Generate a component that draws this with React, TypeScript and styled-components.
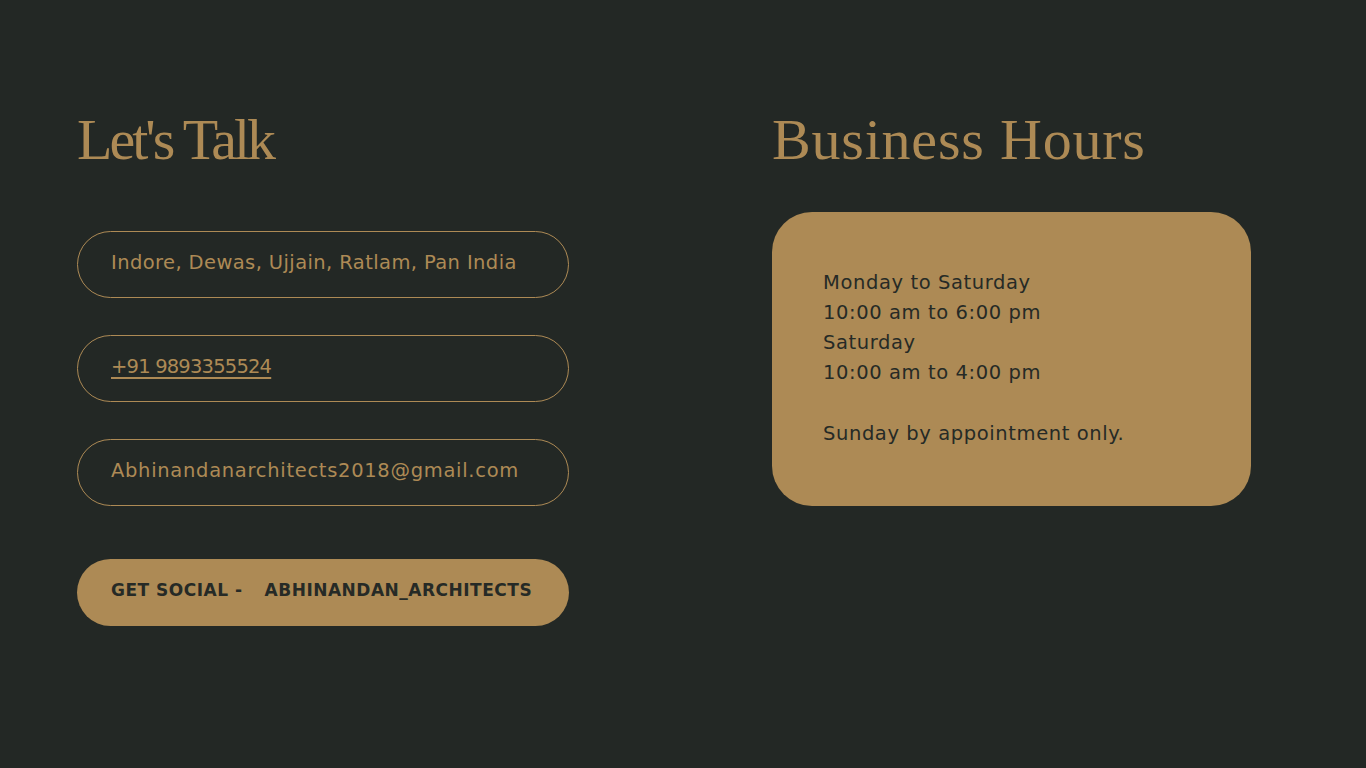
import React from "react";
import styled, { createGlobalStyle } from "styled-components";

const gold = "#ad8a55";
const bg = "#232825";
const ink = "#262a26";

const Global = createGlobalStyle`
  html, body { margin: 0; padding: 0; background: ${bg}; }
  body { font-family: "DejaVu Sans", "Open Sans", sans-serif; }
`;

const Page = styled.div`
  width: 1366px;
  height: 768px;
  box-sizing: border-box;
  padding: 108px 0 0 77px;
  display: grid;
  grid-template-columns: 492px 479px;
  column-gap: 203px;
  align-items: start;
`;

const Column = styled.section`
  display: flex;
  flex-direction: column;
`;

const Heading = styled.h2<{ $tracking: number }>`
  margin: 0;
  font-family: "Liberation Serif", "DejaVu Serif", serif;
  font-weight: 400;
  font-size: 58px;
  line-height: 64px;
  letter-spacing: ${(p) => p.$tracking}px;
  color: ${gold};
`;

const PillList = styled.div`
  margin-top: 59px;
  display: flex;
  flex-direction: column;
  gap: 37px;
`;

const Pill = styled.div<{ $tracking?: number }>`
  box-sizing: border-box;
  height: 67px;
  border: 1px solid ${gold};
  border-radius: 34px;
  padding: 0 33px 4px;
  display: flex;
  align-items: center;
  color: ${gold};
  font-size: 19.5px;
  letter-spacing: ${(p) => p.$tracking ?? 0.4}px;
`;

const PhoneLink = styled.a`
  color: ${gold};
  letter-spacing: -0.8px;
  text-decoration: underline;
  text-decoration-thickness: 2px;
  text-underline-offset: 4px;
`;

const SocialButton = styled.div`
  box-sizing: border-box;
  margin-top: 53px;
  height: 67px;
  border-radius: 34px;
  background: ${gold};
  padding: 0 34px 6px;
  display: flex;
  align-items: center;
  gap: 22px;
  color: ${ink};
  font-weight: 700;
  font-size: 17px;
  letter-spacing: 0.5px;
`;

const Card = styled.div`
  box-sizing: border-box;
  margin-top: 40px;
  height: 294px;
  border-radius: 40px;
  background: ${gold};
  padding: 55.5px 51px 0;
  color: ${ink};
  font-size: 19.5px;
  letter-spacing: 0.6px;
  line-height: 30.3px;
`;

const Line = styled.div<{ $gap?: boolean }>`
  margin-top: ${(p) => (p.$gap ? "30.3px" : "0")};
`;

export default function App() {
  return (
    <>
      <Global />
      <Page>
        <Column>
          <Heading $tracking={-3}>Let's Talk</Heading>
          <PillList>
            <Pill $tracking={0.4}>Indore, Dewas, Ujjain, Ratlam, Pan India</Pill>
            <Pill>
              <PhoneLink href="#">+91 9893355524</PhoneLink>
            </Pill>
            <Pill $tracking={0.7}>Abhinandanarchitects2018@gmail.com</Pill>
          </PillList>
          <SocialButton>
            <span>GET SOCIAL -</span>
            <span>ABHINANDAN_ARCHITECTS</span>
          </SocialButton>
        </Column>
        <Column>
          <Heading $tracking={0.8}>Business Hours</Heading>
          <Card>
            <Line>Monday to Saturday</Line>
            <Line>10:00 am to 6:00 pm</Line>
            <Line>Saturday</Line>
            <Line>10:00 am to 4:00 pm</Line>
            <Line $gap>Sunday by appointment only.</Line>
          </Card>
        </Column>
      </Page>
    </>
  );
}
